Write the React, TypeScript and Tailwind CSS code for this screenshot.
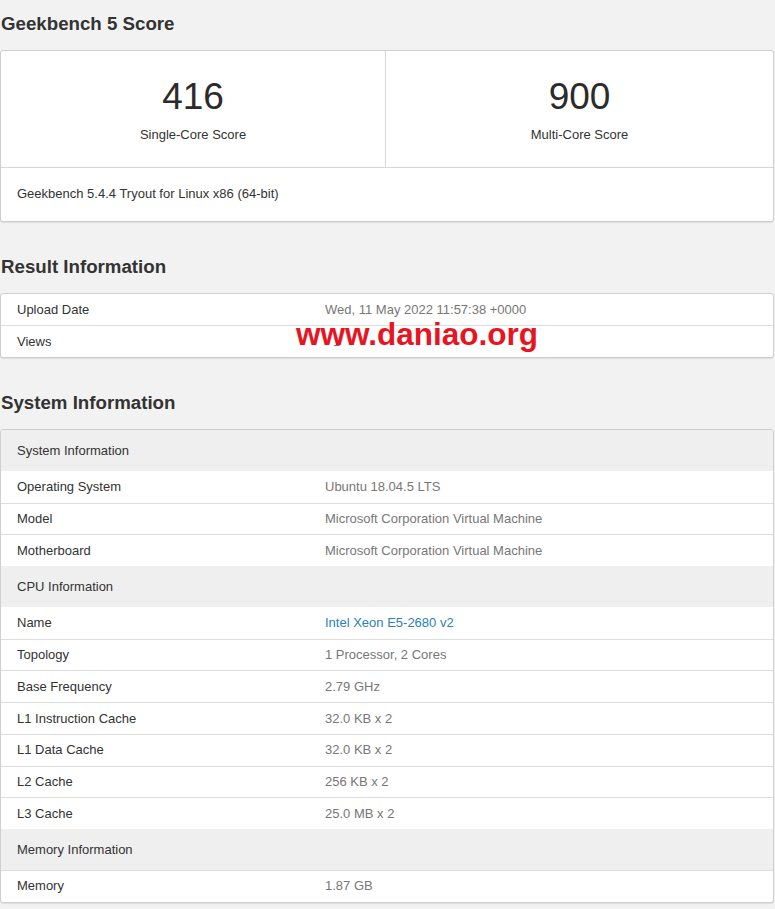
import React from "react";

type Row = { label: string; value: string; link?: boolean };
type Section = { title: string; rows: Row[] };

const sections: Section[] = [
  {
    title: "System Information",
    rows: [
      { label: "Operating System", value: "Ubuntu 18.04.5 LTS" },
      { label: "Model", value: "Microsoft Corporation Virtual Machine" },
      { label: "Motherboard", value: "Microsoft Corporation Virtual Machine" },
    ],
  },
  {
    title: "CPU Information",
    rows: [
      { label: "Name", value: "Intel Xeon E5-2680 v2", link: true },
      { label: "Topology", value: "1 Processor, 2 Cores" },
      { label: "Base Frequency", value: "2.79 GHz" },
      { label: "L1 Instruction Cache", value: "32.0 KB x 2" },
      { label: "L1 Data Cache", value: "32.0 KB x 2" },
      { label: "L2 Cache", value: "256 KB x 2" },
      { label: "L3 Cache", value: "25.0 MB x 2" },
    ],
  },
  {
    title: "Memory Information",
    rows: [{ label: "Memory", value: "1.87 GB" }],
  },
];

function Heading({ children }: { children: React.ReactNode }) {
  return (
    <h2 className="text-[18.7px] font-bold leading-[28px] text-[#333] pl-px mb-3">{children}</h2>
  );
}

function Card({ children, className = "" }: { children: React.ReactNode; className?: string }) {
  return (
    <div
      className={
        "bg-white border border-[#cfcfcf] rounded-[3px] shadow-[0_1px_1px_rgba(0,0,0,0.08)] overflow-hidden " +
        className
      }
    >
      {children}
    </div>
  );
}

export default function App() {
  return (
    <div
      className="min-h-[909px] bg-[#f2f2f2] text-[#333] text-[13px]"
      style={{ fontFamily: '"Liberation Sans", Arial, sans-serif' }}
    >
      <div className="w-[774px] pt-[10px]">
        <Heading>Geekbench 5 Score</Heading>
        <Card>
          <div className="flex border-b border-[#d6d6d6]">
            <div className="w-[385px] border-r border-[#d6d6d6] flex flex-col items-center pt-[26px] pb-[22px]">
              <div className="text-[37px] leading-[40px] text-[#2b2b2b]">416</div>
              <div className="mt-2 leading-[20px]">Single-Core Score</div>
            </div>
            <div className="flex-1 flex flex-col items-center pt-[26px] pb-[22px]">
              <div className="text-[37px] leading-[40px] text-[#2b2b2b]">900</div>
              <div className="mt-2 leading-[20px]">Multi-Core Score</div>
            </div>
          </div>
          <div className="px-4 pt-4 pb-[17px] leading-[20px]">Geekbench 5.4.4 Tryout for Linux x86 (64-bit)</div>
        </Card>

        <div className="mt-[31px]">
          <Heading>Result Information</Heading>
          <div className="relative">
            <Card>
              <div className="flex h-[31px] items-center">
                <div className="w-[324px] pl-4">Upload Date</div>
                <div className="text-[#777]">Wed, 11 May 2022 11:57:38 +0000</div>
              </div>
              <div className="flex h-[32px] items-center border-t border-[#dedede]">
                <div className="w-[324px] pl-4">Views</div>
                <div className="text-[#777] pl-[8px]">1</div>
              </div>
            </Card>
            <div
              className="absolute left-[296px] top-[26px] text-[31.5px] leading-[30px] font-bold text-[#e8141f] whitespace-nowrap"
              style={{ fontFamily: '"Liberation Sans", Arial, sans-serif' }}
            >
              www.daniao.org
            </div>
          </div>
        </div>

        <div className="mt-[31px]">
          <Heading>System Information</Heading>
          <Card>
            {sections.map((s, si) => (
              <div key={si}>
                <div className="h-[41px] flex items-center pl-4 bg-[#efefef]">{s.title}</div>
                {s.rows.map((r, ri) => (
                  <div
                    key={ri}
                    className={
                      "flex h-[31.7px] items-center " +
                      (ri > 0 || si === 2 ? "border-t border-[#dedede]" : "")
                    }
                  >
                    <div className="w-[324px] pl-4">{r.label}</div>
                    <div className={r.link ? "text-[#2a7fc0]" : "text-[#777]"}>{r.value}</div>
                  </div>
                ))}
              </div>
            ))}
          </Card>
        </div>
      </div>
    </div>
  );
}
